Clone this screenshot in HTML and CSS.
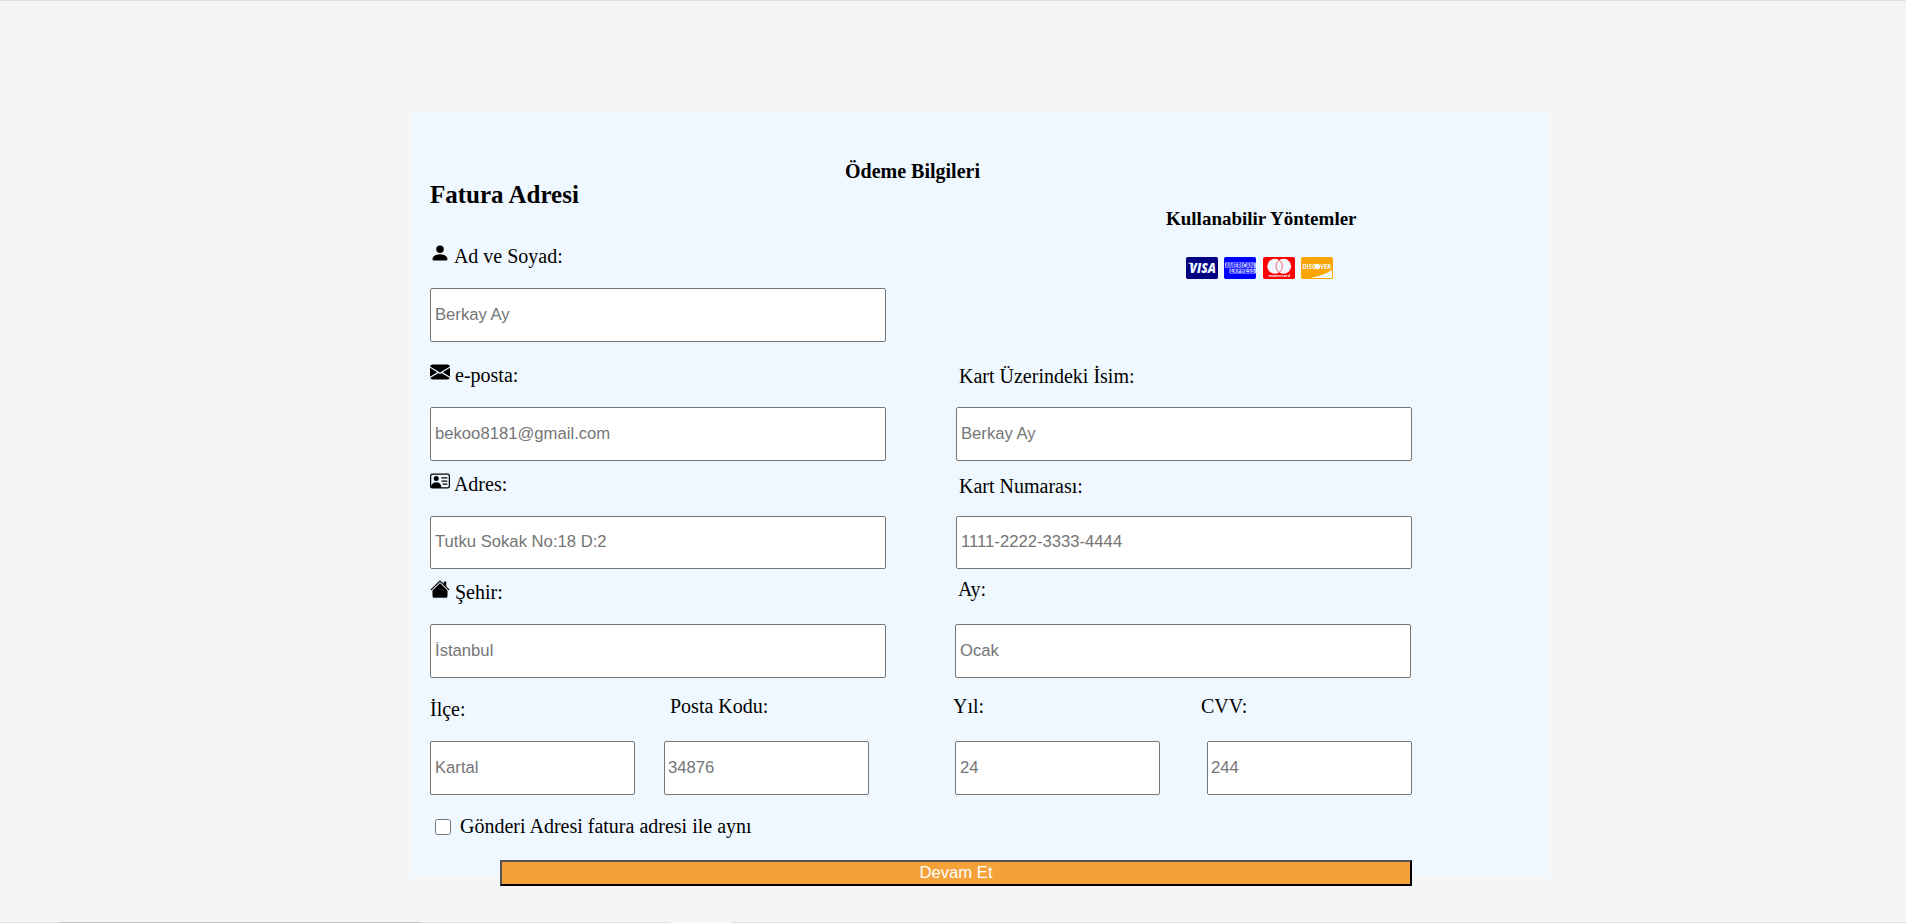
FILE: index.html
```html
<!DOCTYPE html>
<html lang="tr">
<head>
<meta charset="utf-8">
<title>Ödeme</title>
<link rel="stylesheet" href="styles.css">
</head>
<body>
<main class="page">
  <form class="card">
    <h4 class="title">Ödeme Bilgileri</h4>
    <div class="columns">
      <section class="billing">
        <h2 class="heading">Fatura Adresi</h2>
        <div class="field field-name">
          <label class="label"><svg class="icon" viewBox="0 0 16 16"><path d="M3 14s-1 0-1-1 1-4 6-4 6 3 6 4-1 1-1 1zm5-6a3 3 0 1 0 0-6 3 3 0 0 0 0 6"/></svg> Ad ve Soyad:</label>
          <input class="input" type="text" placeholder="Berkay Ay">
        </div>
        <div class="field field-mail">
          <label class="label"><svg class="icon" viewBox="0 0 16 16"><path d="M.05 3.555A2 2 0 0 1 2 2h12a2 2 0 0 1 1.95 1.555L8 8.414zM0 4.697v7.104l5.803-3.558zM6.761 8.83l-6.57 4.027A2 2 0 0 0 2 14h12a2 2 0 0 0 1.808-1.144l-6.57-4.027L8 9.586zm3.436-.586L16 11.801V4.697z"/></svg> e-posta:</label>
          <input class="input" type="text" placeholder="bekoo8181@gmail.com">
        </div>
        <div class="field field-address">
          <label class="label"><svg class="icon" viewBox="0 0 16 16"><path d="M5 8a2 2 0 1 0 0-4 2 2 0 0 0 0 4m4-2.5a.5.5 0 0 1 .5-.5h4a.5.5 0 0 1 0 1h-4a.5.5 0 0 1-.5-.5M9 8a.5.5 0 0 1 .5-.5h4a.5.5 0 0 1 0 1h-4A.5.5 0 0 1 9 8m1 2.5a.5.5 0 0 1 .5-.5h3a.5.5 0 0 1 0 1h-3a.5.5 0 0 1-.5-.5"/><path d="M2 2a2 2 0 0 0-2 2v8a2 2 0 0 0 2 2h12a2 2 0 0 0 2-2V4a2 2 0 0 0-2-2zM1 4a1 1 0 0 1 1-1h12a1 1 0 0 1 1 1v8a1 1 0 0 1-1 1H8.96q.04-.245.04-.5C9 10.567 7.21 9 5 9c-2.086 0-3.8 1.398-3.984 3.181A1 1 0 0 1 1 12z"/></svg> Adres:</label>
          <input class="input input-short" type="text" placeholder="Tutku Sokak No:18 D:2">
        </div>
        <div class="field field-city">
          <label class="label"><svg class="icon" viewBox="0 0 16 16"><path d="m8 3.293 6 6V13.5a1.5 1.5 0 0 1-1.5 1.5h-9A1.5 1.5 0 0 1 2 13.5V9.293z"/><path d="M13 2.5V6l-2-2V2.5a.5.5 0 0 1 .5-.5h1a.5.5 0 0 1 .5.5"/><path d="M7.293 1.5a1 1 0 0 1 1.414 0l6.647 6.646a.5.5 0 0 1-.708.708L8 2.207 1.354 8.854a.5.5 0 1 1-.708-.708z"/></svg> Şehir:</label>
          <input class="input" type="text" placeholder="İstanbul">
        </div>
        <div class="pair pair-billing">
          <div class="field field-district">
            <label class="label">İlçe:</label>
            <input class="input" type="text" placeholder="Kartal">
          </div>
          <div class="field field-zip">
            <label class="label">Posta Kodu:</label>
            <input class="input input-tight" type="text" placeholder="34876">
          </div>
        </div>
        <label class="same"><input class="check" type="checkbox">Gönderi Adresi fatura adresi ile aynı</label>
      </section>
      <section class="payment">
        <h4 class="methods">Kullanabilir Yöntemler</h4>
        <div class="cards">
          <svg class="brand" viewBox="0 0 32 22"><rect width="32" height="22" rx="1.8" fill="navy"/><text class="visa" x="3.6" y="15.6" textLength="26.4" lengthAdjust="spacingAndGlyphs">VISA</text><path d="M2.2 5.8h4.2l2 4.8C7 8.5 5 7 2.2 6.3z" fill="aliceblue"/></svg>
          <svg class="brand" viewBox="0 0 32 22"><rect width="32" height="22" rx="1.8" fill="blue"/><path d="M1 5.5h31v5.5h-31zM5.5 11.5h26.500v5h-26.500z" fill="#b3b9ff"/><text class="amex" x="1.2" y="10.6" textLength="29" lengthAdjust="spacingAndGlyphs">AMERICAN</text><text class="amex" x="6" y="16.3" textLength="24.5" lengthAdjust="spacingAndGlyphs">EXPRESS</text></svg>
          <svg class="brand" viewBox="0 0 32 22"><rect width="32" height="22" rx="1.8" fill="red"/><circle cx="11.8" cy="9.3" r="7.5" fill="aliceblue"/><circle cx="20.6" cy="9.3" r="7.5" fill="aliceblue"/><path d="M16.2 3.2a7.5 7.5 0 0 1 0 12.2a7.5 7.5 0 0 1 0-12.2z" fill="aliceblue" stroke="red" stroke-width=".6"/><text class="master" x="5.5" y="19.8" textLength="21.5" lengthAdjust="spacingAndGlyphs">mastercard</text></svg>
          <svg class="brand" viewBox="0 0 32 22"><rect width="32" height="22" rx="1.8" fill="orange"/><path d="M31 13v7.2q0 .8-.8.8H9.5Q22 18.5 31 13z" fill="aliceblue"/><text class="discover" x="1.5" y="12" textLength="28.5" lengthAdjust="spacingAndGlyphs">DISCOVER</text><circle cx="16.2" cy="9.5" r="2.8" fill="aliceblue"/></svg>
        </div>
        <div class="field field-holder">
          <label class="label">Kart Üzerindeki İsim:</label>
          <input class="input" type="text" placeholder="Berkay Ay">
        </div>
        <div class="field field-number">
          <label class="label">Kart Numarası:</label>
          <input class="input input-short" type="text" placeholder="1111-2222-3333-4444">
        </div>
        <div class="field field-month">
          <label class="label">Ay:</label>
          <input class="input" type="text" placeholder="Ocak">
        </div>
        <div class="pair pair-payment">
          <div class="field field-year">
            <label class="label">Yıl:</label>
            <input class="input" type="text" placeholder="24">
          </div>
          <div class="field field-cvv">
            <label class="label">CVV:</label>
            <input class="input input-tight" type="text" placeholder="244">
          </div>
        </div>
      </section>
    </div>
    <button class="submit" type="button">Devam Et</button>
  </form>
  <div class="edge"><span class="edge-blue"></span><span class="edge-gray"></span><span class="edge-blue"></span><span class="edge-light"></span><span class="edge-blue"></span></div>
</main>
</body>
</html>
```
FILE: styles.css
```css
* { box-sizing: border-box; }

body {
  margin: 0;
  background: whitesmoke;
  color: #000;
  font: 20px/23px "Liberation Serif", "Times New Roman", serif;
}

h2, h4 { margin: 0; }

.page {
  display: flex;
  flex-direction: column;
  justify-content: space-between;
  height: 923px;
  padding-top: 111px;
  border-top: 1px solid #e0e0e0;
  overflow: hidden;
}

.card {
  width: 1140px;
  height: 766px;
  margin-left: 410px;
  padding: 48px 0 0 20px;
  background: aliceblue;
}

.title {
  height: 21px;
  padding-left: 415px;
  font-size: 20px;
}

.columns {
  display: grid;
  grid-template-columns: 456px 457px;
  column-gap: 69px;
  height: 679px;
}

.heading { font-size: 25px; line-height: 28px; }

.label {
  display: block;
  height: 23px;
  white-space: nowrap;
}

.icon {
  width: 20px;
  height: 20px;
  margin-top: -5px;
  vertical-align: baseline;
}

.input {
  display: block;
  width: 100%;
  height: 54px;
  margin: 0;
  padding: 0 3px 1px 4px;
  border: 1px solid #767676;
  border-radius: 2px;
  background: #fff;
  font: 16.667px "Liberation Sans", Arial, sans-serif;
}

.input::placeholder { color: #757575; }
.input-short { height: 53px; }
.input-tight { padding-left: 3px; }

.field-name { padding-top: 36px; }
.field-name .label { margin-bottom: 20px; }
.field-mail { padding-top: 22px; }
.field-mail .label { margin-bottom: 20px; }
.field-address { padding-top: 12px; }
.field-address .label { margin-bottom: 20px; }
.field-city { padding-top: 12px; }
.field-city .label { margin-bottom: 20px; }

.pair { display: grid; }
.pair-billing { grid-template-columns: 205px 205px; column-gap: 29px; }
.field-district { padding-top: 20px; }
.field-district .label { margin-bottom: 20px; }
.field-zip { padding-top: 17px; }
.field-zip .label { margin-bottom: 23px; padding-left: 6px; }

.same {
  display: flex;
  align-items: center;
  height: 23px;
  margin-top: 20px;
}

.check { width: 16px; height: 16px; margin: 0 9px 0 5px; }

.methods {
  margin-top: 26px;
  padding-left: 211px;
  font-size: 19px;
}

.cards {
  display: flex;
  gap: 6.4px;
  margin-top: 27px;
  padding-left: 231px;
}

.brand { width: 32px; height: 22px; overflow: visible; }

.brand text {
  fill: aliceblue;
  font-family: "Open Sans", sans-serif;
  font-weight: 700;
}

.brand .visa { font-size: 13.5px; font-style: italic; font-weight: 800; }
.brand .amex { fill: blue; font-size: 6.5px; font-weight: 600; }
.brand .master { font-size: 3.8px; }
.brand .discover { font-size: 7.2px; }

.field-holder { padding: 86px 0 0 1px; }
.field-holder .label { margin-bottom: 19px; padding-left: 3px; }
.field-number { padding: 14px 0 0 1px; }
.field-number .label { margin-bottom: 18px; padding-left: 3px; }
.field-month { padding: 9px 1px 0 0; }
.field-month .label { margin-bottom: 23px; padding-left: 3px; }

.pair-payment {
  grid-template-columns: 205px 205px;
  column-gap: 47px;
  padding-top: 17px;
}

.pair-payment .label { margin-bottom: 23px; }
.field-year .label { margin-left: -2px; }
.field-cvv .label { margin-left: -6px; }

.submit {
  display: block;
  width: 912px;
  height: 26px;
  margin-left: 70px;
  padding: 0;
  border: 2px outset #000;
  border-radius: 0;
  background: #f4a13a;
  color: #fff;
  font: 16.667px/20px "Liberation Sans", Arial, sans-serif;
}

.edge {
  display: grid;
  grid-template-columns: 60px 360px 250px 61px 1fr;
  height: 1px;
}

.edge-blue { background: #d3e3ec; }
.edge-gray { background: #c9c7c5; }
.edge-light { background: #f4f7f8; }
```
